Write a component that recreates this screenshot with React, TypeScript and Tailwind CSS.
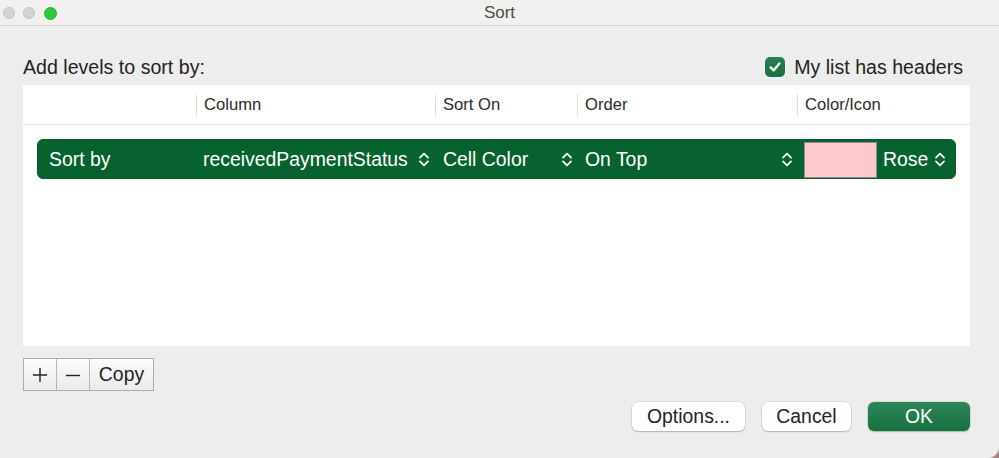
import React, { useState } from 'react'

const font = { fontFamily: '"Liberation Sans", Arial, sans-serif' }

function UpDown({ className = '' }: { className?: string }) {
  return (
    <svg width="12" height="17" viewBox="0 0 12 17" className={className} fill="none">
      <path d="M2 6.6 L6 2.6 L10 6.6" stroke="white" strokeWidth="1.8" strokeLinecap="round" strokeLinejoin="round" />
      <path d="M2 10.4 L6 14.4 L10 10.4" stroke="white" strokeWidth="1.8" strokeLinecap="round" strokeLinejoin="round" />
    </svg>
  )
}

export default function App() {
  const [hasHeaders, setHasHeaders] = useState<boolean>(true)

  const columns = [
    { label: '', width: 'w-[173px]' },
    { label: 'Column', width: 'w-[239px]' },
    { label: 'Sort On', width: 'w-[142px]' },
    { label: 'Order', width: 'w-[220px]' },
    { label: 'Color/Icon', width: 'flex-1' },
  ]

  return (
    <div className="w-[999px] h-[458px] bg-[#a88484] overflow-hidden" style={font}>
      <div className="w-full h-full bg-[#ededed] rounded-br-[11px] flex flex-col text-[#232323]">
        {/* title bar */}
        <div className="h-[26px] shrink-0 bg-[#f1f0ee] border-b border-[#d6d5d3] grid grid-cols-[1fr_auto_1fr] items-center">
          <div className="flex items-center gap-[8px] pl-[3px] pt-[1px]">
            <span className="w-[12px] h-[12px] rounded-full bg-[#d3d3d3] border border-[#c3c3c3]" />
            <span className="w-[12px] h-[12px] rounded-full bg-[#d3d3d3] border border-[#c3c3c3]" />
            <span className="w-[13px] h-[13px] rounded-full bg-[#2cc841] border border-[#22b236] ml-[1px]" />
          </div>
          <div className="text-[17px] text-[#4b4b4b] leading-none">Sort</div>
          <div />
        </div>

        <div className="flex flex-col pl-[23px] pr-[29px]">
          {/* top line */}
          <div className="flex items-center justify-between h-[22px] mt-[30px] mb-[7px]">
            <div className="text-[19.6px] leading-[22px]">Add levels to sort by:</div>
            <label className="flex items-center gap-[9px] pr-[7px] cursor-pointer">
              <button
                onClick={() => setHasHeaders(!hasHeaders)}
                className={`w-[20px] h-[20px] rounded-[5px] flex items-center justify-center mt-[-1px] ${
                  hasHeaders ? 'bg-gradient-to-b from-[#2a8152] to-[#1b6d3f]' : 'bg-white border border-[#b5b5b5]'
                }`}
              >
                {hasHeaders && (
                  <svg width="14" height="14" viewBox="0 0 14 14" fill="none">
                    <path d="M2.6 7.4 L5.6 10.4 L11.4 3.4" stroke="white" strokeWidth="2.3" strokeLinecap="round" strokeLinejoin="round" />
                  </svg>
                )}
              </button>
              <span className="text-[19.6px] leading-[22px]">My list has headers</span>
            </label>
          </div>

          {/* sort levels table */}
          <div className="h-[261px] bg-white flex flex-col">
            <div className="h-[40px] shrink-0 flex border-b border-[#e2e2e2]">
              {columns.map((c, i) => (
                <div key={i} className={`${c.width} flex items-center`}>
                  {i > 0 && (
                    <span className="h-[22px] border-l border-[#dedede] pl-[7px] text-[16.6px] leading-[22px] text-[#2b2b2b]">
                      {c.label}
                    </span>
                  )}
                </div>
              ))}
            </div>

            <div className="mx-[14px] mt-[14px] h-[40px] rounded-[6px] bg-[#07622f] border border-[#0a5a2c] flex items-center text-white text-[19.4px] pt-[1px]">
              <div className="w-[158px] pl-[11px]">Sort by</div>
              <div className="w-[239px] flex items-center justify-between pl-[7px] pr-[5px]">
                <span>receivedPaymentStatus</span>
                <UpDown />
              </div>
              <div className="w-[142px] flex items-center justify-between pl-[8px] pr-[4px]">
                <span>Cell Color</span>
                <UpDown />
              </div>
              <div className="w-[220px] flex items-center justify-between pl-[8px] pr-[4px]">
                <span>On Top</span>
                <UpDown />
              </div>
              <div className="flex-1 flex items-center pl-[7px] pr-[9px]">
                <span className="w-[73px] h-[36px] bg-[#ffc7ce] border border-[#8a8a8a]" />
                <span className="ml-[6px]">Rose</span>
                <UpDown className="ml-auto" />
              </div>
            </div>
          </div>

          {/* add / remove / copy */}
          <div className="mt-[12px] flex">
            <div className="h-[33px] flex border border-[#acacac] bg-gradient-to-b from-[#fbfbfb] to-[#ebebeb]">
              <button className="w-[33px] flex items-center justify-center border-r border-[#b8b8b8]">
                <svg width="16" height="16" viewBox="0 0 16 16">
                  <path d="M8 1 V15 M1 8 H15" stroke="#222" strokeWidth="1.4" />
                </svg>
              </button>
              <button className="w-[33px] flex items-center justify-center border-r border-[#b8b8b8]">
                <svg width="16" height="16" viewBox="0 0 16 16">
                  <path d="M1 8.5 H15" stroke="#222" strokeWidth="1.4" />
                </svg>
              </button>
              <button className="w-[63px] text-[19.4px] leading-none flex items-center justify-center">Copy</button>
            </div>
          </div>

          {/* dialog buttons */}
          <div className="mt-[11px] flex justify-end gap-[17px]">
            <button className="w-[113px] h-[29px] rounded-[6px] bg-white text-[19.4px] shadow-[0_0_0_0.5px_rgba(0,0,0,0.14),0_1px_1.5px_rgba(0,0,0,0.2)]">
              Options...
            </button>
            <button className="w-[89px] h-[29px] rounded-[6px] bg-white text-[19.4px] shadow-[0_0_0_0.5px_rgba(0,0,0,0.14),0_1px_1.5px_rgba(0,0,0,0.2)]">
              Cancel
            </button>
            <button className="w-[102px] h-[29px] rounded-[6px] bg-gradient-to-b from-[#2d8758] to-[#16703f] text-white text-[19.4px] shadow-[0_0_0_0.5px_rgba(0,0,0,0.15),0_1px_1.5px_rgba(0,0,0,0.2)]">
              OK
            </button>
          </div>
        </div>
      </div>
    </div>
  )
}
